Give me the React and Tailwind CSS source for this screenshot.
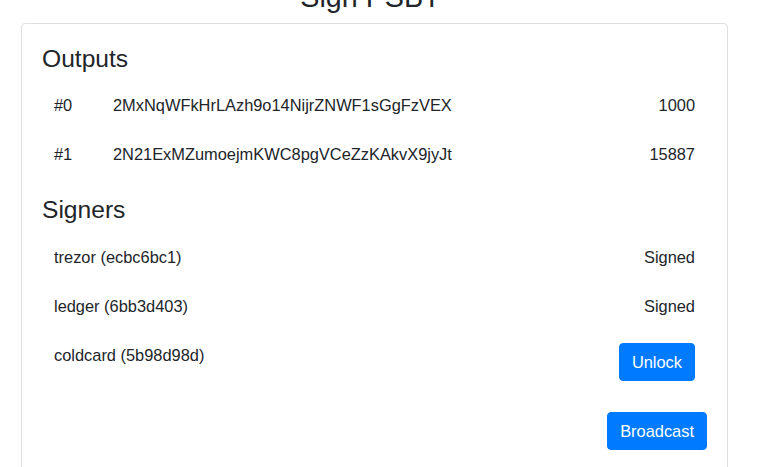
import React from 'react';

const outputs = [
    { idx: '#0', address: '2MxNqWFkHrLAzh9o14NijrZNWF1sGgFzVEX', amount: 1000 },
    { idx: '#1', address: '2N21ExMZumoejmKWC8pgVCeZzKAkvX9jyJt', amount: 15887 },
];

const signers = [
    { name: 'trezor', fingerprint: 'ecbc6bc1', signed: true },
    { name: 'ledger', fingerprint: '6bb3d403', signed: true },
    { name: 'coldcard', fingerprint: '5b98d98d', signed: false },
];

const btn = 'px-3 py-1.5 bg-[#007bff] text-white text-[16.4px] leading-6 rounded border border-[#007bff] hover:bg-[#0069d9]';

const App = () => {
    return (
        <div className="min-h-screen bg-white overflow-hidden text-[#212529] text-[16.4px] font-['Liberation_Sans',Arial,sans-serif]">
            <div className="w-[707px] ml-[21px]">
                <h3 className="text-[28.7px] leading-[1.2] text-center mt-[-20px] mb-[9px] pr-2">Sign PSBT</h3>

                <div className="border border-[#dfdfdf] rounded p-5">
                    <h4 className="text-[24.6px] leading-[1.2] mb-[7px]">Outputs</h4>
                    <div>
                        {outputs.map(o => (
                            <div key={o.idx} className="flex px-3 py-3 leading-6 border-b border-transparent">
                                <span className="w-[59px]">{o.idx}</span>
                                <span>{o.address}</span>
                                <span className="ml-auto">{o.amount}</span>
                            </div>
                        ))}
                    </div>

                    <h4 className="text-[24.6px] leading-[1.2] mt-[16px] mb-[9px]">Signers</h4>
                    <div>
                        {signers.map(s => (
                            <div key={s.name} className="flex items-start justify-between px-3 py-3 leading-6 border-b border-transparent">
                                <span>{s.name} ({s.fingerprint})</span>
                                {s.signed ? (
                                    <span>Signed</span>
                                ) : (
                                    <button type="button" className={btn}>Unlock</button>
                                )}
                            </div>
                        ))}
                    </div>

                    <div className="flex justify-end mt-[18px]">
                        <button type="button" className={btn}>Broadcast</button>
                    </div>
                </div>
            </div>
        </div>
    );
};

export default App;
